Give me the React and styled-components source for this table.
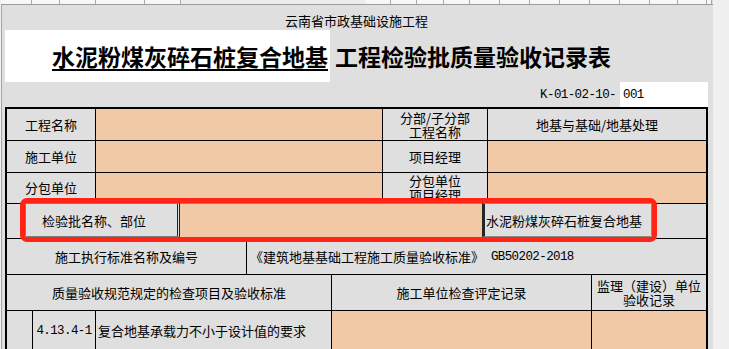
import styled, { createGlobalStyle } from "styled-components";

// 表格用的颜色
const GREY = "#dfdfdf";
const PEACH = "#f1c9a6";

const GlobalStyle = createGlobalStyle`
  html, body {
    margin: 0;
    padding: 0;
    background: #f0f0f0;
    overflow: hidden;
  }
  body {
    font-family: "Noto Sans CJK SC", "Noto Sans", sans-serif;
    font-size: 13px;
    color: #000;
  }
`;

const Page = styled.div`
  width: 729px;
  height: 349px;
  overflow: hidden;
  display: flex;
`;

// Excel 工作表区域
const Sheet = styled.div`
  width: 712px;
  margin-left: 1px;
  border-left: 1px solid #a4a4a4;
  background: ${GREY};
  box-sizing: border-box;
`;

// 顶部的一条列头残边
const HeaderStrip = styled.div`
  display: flex;
  height: 5px;
  border-bottom: 1px solid #9c9c9c;
  box-sizing: border-box;
  margin-left: -1px;
`;

const HeaderCell = styled.div`
  flex: none;
  width: ${(p) => p.$w}px;
  height: 100%;
  box-sizing: border-box;
  background: ${(p) => (p.$plain ? "#ececec" : "#f7f7f7")};
  border-right: 1px solid ${(p) => (p.$plain ? "#ececec" : "#a8a8a8")};
`;

const Content = styled.div`
  padding-left: 3px;
`;

const SubTitle = styled.div`
  width: 703px;
  height: 25px;
  display: flex;
  align-items: center;
  justify-content: center;
  padding-top: 5px;
  box-sizing: border-box;
  font-size: 13px;
`;

const TitleRow = styled.div`
  display: flex;
  align-items: center;
  height: 52px;
  font-size: 23px;
  font-weight: 700;
`;

const TitleBox = styled.div`
  width: 325px;
  height: 100%;
  background: #fff;
  display: flex;
  align-items: center;
  justify-content: flex-end;
  padding-right: 2px;
  box-sizing: border-box;
`;

const Underlined = styled.span`
  text-decoration: underline;
  text-decoration-thickness: 2px;
  text-underline-offset: 3px;
`;

const TitleRest = styled.span`
  margin-left: 5px;
`;

const CodeRow = styled.div`
  width: 703px;
  height: 25px;
  display: flex;
  justify-content: flex-end;
  align-items: center;
`;

// 半角数字、字母用等宽字体
const Mono = styled.span`
  font-family: "Liberation Mono", "DejaVu Sans Mono", monospace;
  font-size: 12.5px;
  letter-spacing: -0.6px;
`;

const CodeBox = styled.div`
  width: 88px;
  height: 100%;
  margin-left: 4px;
  background: #fff;
  display: flex;
  align-items: center;
  padding-left: 3px;
  box-sizing: border-box;
`;

const TableWrap = styled.div`
  position: relative;
  width: 703px;
`;

const Table = styled.div`
  border: 2px solid #000;
  border-bottom: none;
  box-sizing: border-box;
`;

const Row = styled.div`
  display: flex;
  height: ${(p) => p.$h}px;
  border-bottom: ${(p) => (p.$last ? "none" : "1px solid #000")};
  box-sizing: border-box;
`;

const Cell = styled.div`
  flex: ${(p) => (p.$w ? "none" : "1")};
  width: ${(p) => (p.$w ? `${p.$w}px` : "auto")};
  box-sizing: border-box;
  background: ${(p) => (p.$peach ? PEACH : GREY)};
  border-right: 1px solid #000;
  display: flex;
  align-items: center;
  justify-content: ${(p) => (p.$left ? "flex-start" : "center")};
  padding-left: ${(p) => p.$pl || 0}px;
  text-align: center;
  line-height: 14px;
  white-space: pre-line;
  overflow: hidden;

  &:last-child {
    border-right: none;
  }
`;

// 红色标注框（叠在表格上）
const RedMark = styled.div`
  position: absolute;
  left: 15px;
  top: 91px;
  width: 637px;
  height: 44px;
  border: 5px solid #ff2415;
  border-radius: 7px;
  box-sizing: border-box;
  display: flex;
  overflow: hidden;
`;

const MarkLabel = styled.div`
  width: 155px;
  flex: none;
  box-sizing: border-box;
  background: ${GREY};
  border: 1px solid #7c7c7c;
  border-right: 3px double #222;
  display: flex;
  align-items: center;
  padding-left: 16px;
`;

const MarkInput = styled.div`
  width: 302px;
  flex: none;
  background: ${PEACH};
  border-top: 1px solid #8c8c8c;
`;

const MarkValue = styled.div`
  flex: 1;
  box-sizing: border-box;
  background: ${GREY};
  border: 1px solid #8a8a8a;
  border-left: 3px solid #262626;
  display: flex;
  align-items: center;
  padding-left: 1px;
  white-space: nowrap;
`;

const headerCols = [
  31, 28, 36, 49, 36, 184, 26, 26, 27, 26, 30, 30, 30, 30, 30, 30, 28, 29, 5,
];

function App() {
  return (
    <Page>
      <GlobalStyle />
      <Sheet>
        <HeaderStrip>
          {headerCols.map((w, i) => (
            <HeaderCell key={i} $w={w} $plain={i === 5} />
          ))}
        </HeaderStrip>
        <Content>
          <SubTitle>云南省市政基础设施工程</SubTitle>
          <TitleRow>
            <TitleBox>
              <Underlined>水泥粉煤灰碎石桩复合地基</Underlined>
            </TitleBox>
            <TitleRest>工程检验批质量验收记录表</TitleRest>
          </TitleRow>
          <CodeRow>
            <Mono>K-01-02-10-</Mono>
            <CodeBox>
              <Mono>001</Mono>
            </CodeBox>
          </CodeRow>

          <TableWrap>
            <Table>
              <Row $h={32}>
                <Cell $w={89}>工程名称</Cell>
                <Cell $w={287} $peach />
                <Cell $w={105}>{"分部/子分部\n工程名称"}</Cell>
                <Cell>地基与基础/地基处理</Cell>
              </Row>
              <Row $h={32}>
                <Cell $w={89}>施工单位</Cell>
                <Cell $w={287} $peach />
                <Cell $w={105}>项目经理</Cell>
                <Cell $peach />
              </Row>
              <Row $h={31}>
                <Cell $w={89}>分包单位</Cell>
                <Cell $w={287} $peach />
                <Cell $w={105}>{"分包单位\n项目经理"}</Cell>
                <Cell $peach />
              </Row>
              <Row $h={35}>
                <Cell />
              </Row>
              <Row $h={36}>
                <Cell $w={240}>施工执行标准名称及编号</Cell>
                <Cell $left $pl={3}>
                  《建筑地基基础工程施工质量验收标准》
                  <Mono>&nbsp;GB50202-2018</Mono>
                </Cell>
              </Row>
              <Row $h={36}>
                <Cell $w={325}>质量验收规范规定的检查项目及验收标准</Cell>
                <Cell $w={260}>施工单位检查评定记录</Cell>
                <Cell>{"监理（建设）单位\n验收记录"}</Cell>
              </Row>
              <Row $h={40} $last>
                <Cell $w={26} />
                <Cell $w={63}>
                  <Mono>4.13.4-1</Mono>
                </Cell>
                <Cell $w={236} $left $pl={2}>
                  复合地基承载力不小于设计值的要求
                </Cell>
                <Cell $w={260} $peach />
                <Cell $peach />
              </Row>
            </Table>

            <RedMark>
              <MarkLabel>检验批名称、部位</MarkLabel>
              <MarkInput />
              <MarkValue>水泥粉煤灰碎石桩复合地基</MarkValue>
            </RedMark>
          </TableWrap>
        </Content>
      </Sheet>
    </Page>
  );
}

export default App;
